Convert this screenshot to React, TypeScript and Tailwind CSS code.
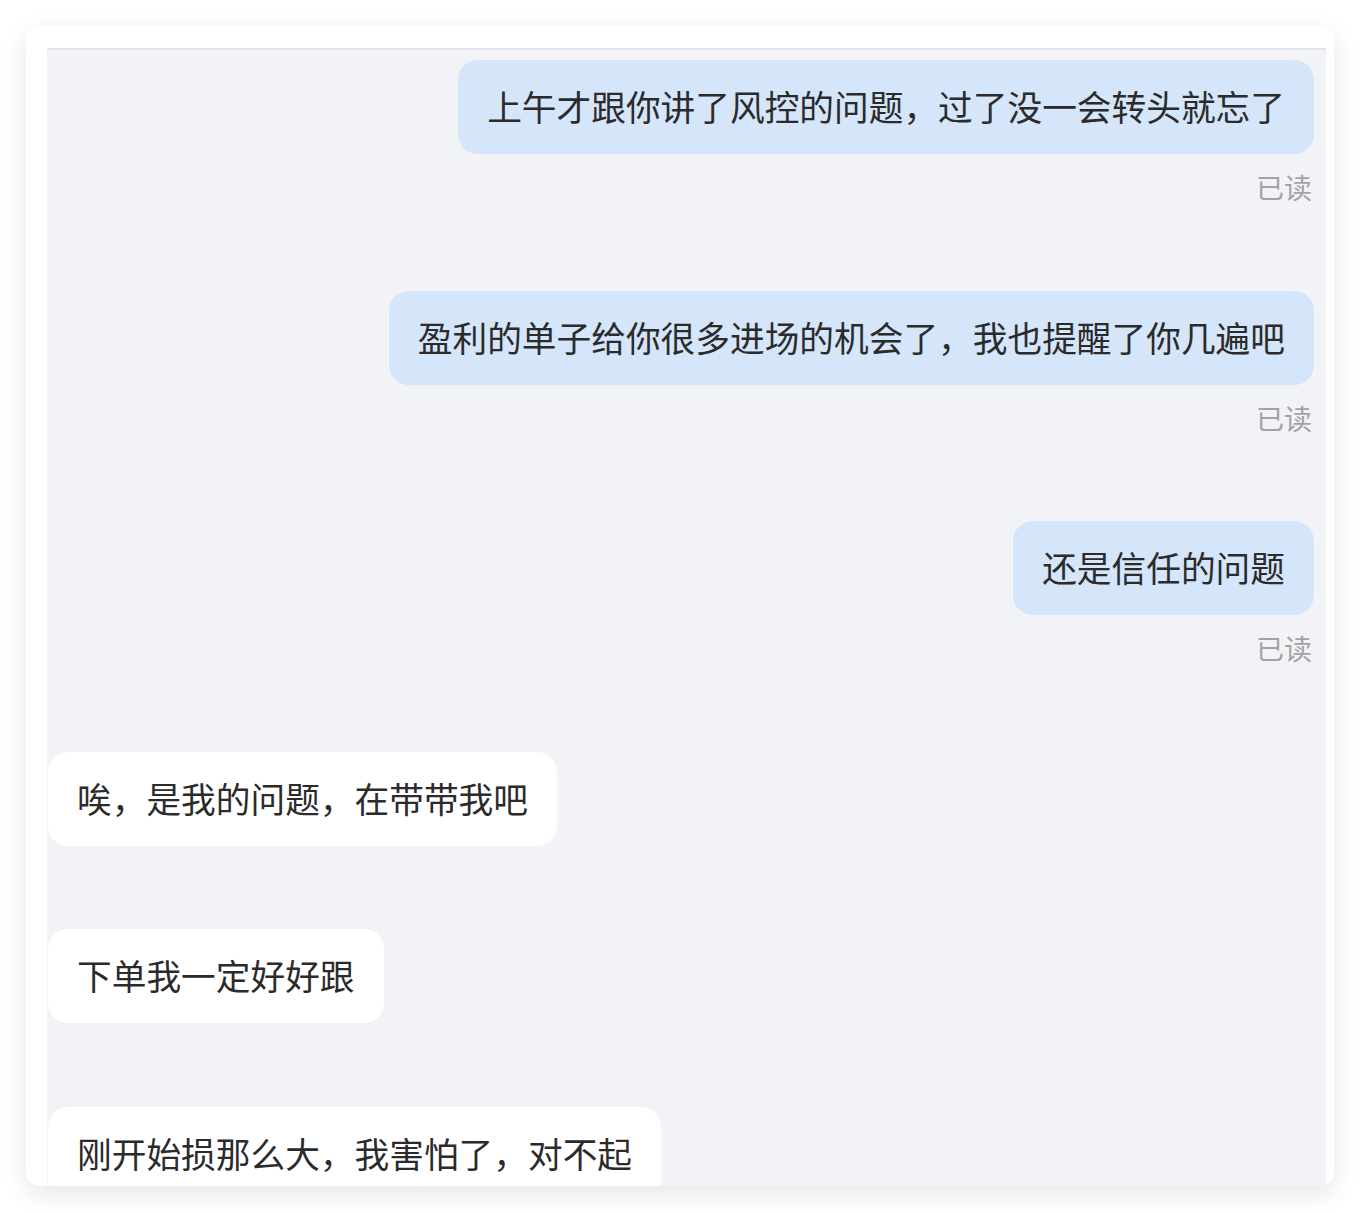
const messages = [
  { side: 'right', text: '上午才跟你讲了风控的问题，过了没一会转头就忘了' },
  { side: 'right', text: '盈利的单子给你很多进场的机会了，我也提醒了你几遍吧' },
  { side: 'right', text: '还是信任的问题' },
  { side: 'left', text: '唉，是我的问题，在带带我吧' },
  { side: 'left', text: '下单我一定好好跟' },
  { side: 'left', text: '刚开始损那么大，我害怕了，对不起' },
];

const font = { fontFamily: '"Noto Sans CJK SC", "Noto Sans", sans-serif' };

function Bubble({ side, text }: { side: string; text: string }) {
  const mine = side === 'right';
  return (
    <div className={mine ? 'flex flex-col items-end' : 'flex flex-col items-start'}>
      <div
        className={
          mine
            ? 'rounded-[20px] bg-[#d5e5fa] px-[29px] pt-[20px] pb-[22px] text-[34.7px] leading-[52px] text-[#2b2b2b] whitespace-nowrap'
            : 'rounded-[20px] bg-white px-[29px] pt-[20px] pb-[22px] text-[34.7px] leading-[52px] text-[#2b2b2b] whitespace-nowrap'
        }
      >
        {text}
      </div>
      {mine && (
        <div className="mt-[13px] pr-[2px] text-[28px] leading-[40px] text-[#a3a3a3]">已读</div>
      )}
    </div>
  );
}

export default function App() {
  return (
    <div className="min-h-[1212px] bg-white p-[26px]" style={font}>
      <div className="h-[1160px] overflow-hidden rounded-[14px] bg-white pt-[22px] pl-[21px] pr-[8px] shadow-[0_8px_26px_rgba(0,0,0,0.1)]">
        <div className="h-full overflow-hidden border-t-2 border-[#e2e4ea] bg-[#f2f3f7] pt-[10px] pl-[1px] pr-[12px]">
          <div className="flex flex-col gap-[83.5px]">
            {messages.map((m, i) => (
              <Bubble key={i} side={m.side} text={m.text} />
            ))}
          </div>
        </div>
      </div>
    </div>
  );
}
